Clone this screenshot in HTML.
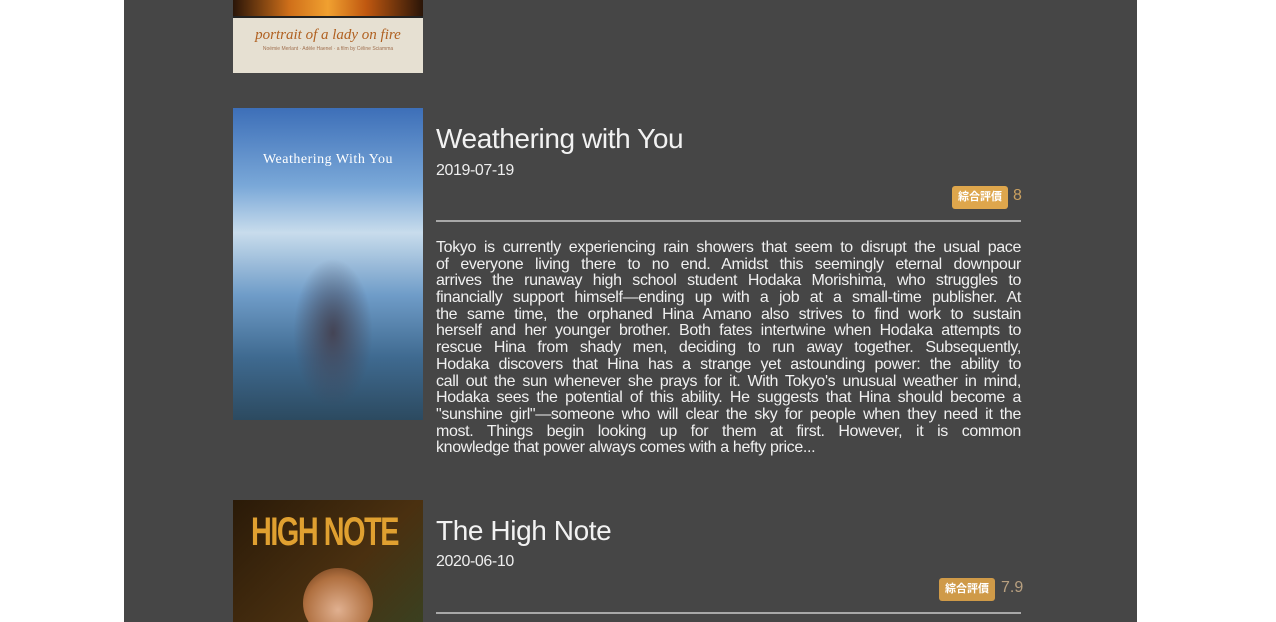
<!DOCTYPE html>
<html><head><meta charset="utf-8"><style>
*{margin:0;padding:0;box-sizing:border-box}
html,body{width:1276px;height:622px;overflow:hidden}
body{background:#fff;position:relative;font-family:"Liberation Sans","Noto Sans CJK JP",sans-serif;color:#eee}
.panel{position:absolute;left:124px;top:0;width:1013px;height:622px;background:#464646}
.abs{position:absolute}
.title{font-size:28px;color:#f2f2f2;letter-spacing:-0.4px}
.date{font-size:16px;color:#eee;letter-spacing:-0.4px}
.badge{background:#dea64c;color:#fff;font-size:11px;font-weight:bold;padding:0 6px;height:23px;line-height:23px;border-radius:3px}
.rate{font-size:16px;color:#c9a060}
.hr{height:2px;background:#a8a8a8}
.desc{font-size:16px;line-height:16.7px;color:#f0f0f0;letter-spacing:-0.35px;width:585px}
.desc div{text-align:justify;text-align-last:justify;white-space:nowrap;height:16.7px}
.desc div.l{text-align-last:left}
</style></head><body>
<div class="panel"></div>
<div class="abs" style="left:233px;top:0;width:190px;height:73px;background:#e6e0d2;overflow:hidden">
 <div style="height:16px;background:linear-gradient(90deg,#2a1508,#d0701a 30%,#f0a030 50%,#c05810 70%,#2a1508)"></div>
 <div style="height:2px;background:#222"></div>
 <div style="text-align:center;font-family:'Liberation Serif',serif;font-style:italic;color:#b06020;font-size:15px;margin-top:9px">portrait of a lady on fire</div>
 <div style="text-align:center;color:#a07050;font-size:5px;margin-top:2px">Noémie Merlant · Adèle Haenel · a film by Céline Sciamma</div>
</div>
<div class="abs" style="left:233px;top:108px;width:190px;height:312px;overflow:hidden;background:linear-gradient(180deg,#3d6fb8 0%,#7aa8d8 25%,#c8dcec 40%,#6f9cc8 60%,#3f6a90 80%,#2c4a60 100%)">
 <div style="position:absolute;top:44px;width:100%;text-align:center;font-family:'Liberation Serif',serif;color:#fff;font-size:14px;letter-spacing:0.5px">Weathering With You</div>
 <div style="position:absolute;left:60px;top:150px;width:80px;height:150px;background:radial-gradient(ellipse at center,#445 0%,transparent 70%)"></div>
</div>
<div class="abs title" style="left:436px;top:123px">Weathering with You</div>
<div class="abs date" style="left:436px;top:162px">2019-07-19</div>
<div class="abs badge" style="left:952px;top:186px">綜合評價</div>
<div class="abs rate" style="left:1013px;top:187px">8</div>
<div class="abs hr" style="left:436px;top:220px;width:585px"></div>
<div class="abs desc" style="left:436px;top:240px">
<div>Tokyo is currently experiencing rain showers that seem to disrupt the usual pace</div>
<div>of everyone living there to no end. Amidst this seemingly eternal downpour</div>
<div>arrives the runaway high school student Hodaka Morishima, who struggles to</div>
<div>financially support himself—ending up with a job at a small-time publisher. At</div>
<div>the same time, the orphaned Hina Amano also strives to find work to sustain</div>
<div>herself and her younger brother. Both fates intertwine when Hodaka attempts to</div>
<div>rescue Hina from shady men, deciding to run away together. Subsequently,</div>
<div>Hodaka discovers that Hina has a strange yet astounding power: the ability to</div>
<div>call out the sun whenever she prays for it. With Tokyo's unusual weather in mind,</div>
<div>Hodaka sees the potential of this ability. He suggests that Hina should become a</div>
<div>"sunshine girl"—someone who will clear the sky for people when they need it the</div>
<div>most. Things begin looking up for them at first. However, it is common</div>
<div class="l">knowledge that power always comes with a hefty price...</div>
</div>
<div class="abs" style="left:233px;top:500px;width:190px;height:122px;overflow:hidden;background:linear-gradient(135deg,#2a1a08,#4a3010 60%,#3a4020)">
 <div style="position:absolute;left:18px;top:10px;color:#e0a030;font-weight:bold;font-size:40px;letter-spacing:-2px;white-space:nowrap;transform:scaleX(0.72);transform-origin:left">HIGH NOTE</div>
 <div style="position:absolute;left:70px;top:68px;width:70px;height:70px;border-radius:50%;background:radial-gradient(circle at 50% 60%,#e0b090,#b07040 60%,#5a3010)"></div>
</div>
<div class="abs title" style="left:436px;top:515px">The High Note</div>
<div class="abs date" style="left:436px;top:553px">2020-06-10</div>
<div class="abs badge" style="left:939px;top:578px;background:#cf9a48">綜合評價</div>
<div class="abs rate" style="left:1001px;top:579px;color:#b8a080">7.9</div>
<div class="abs hr" style="left:436px;top:612px;width:585px"></div>
</body></html>
